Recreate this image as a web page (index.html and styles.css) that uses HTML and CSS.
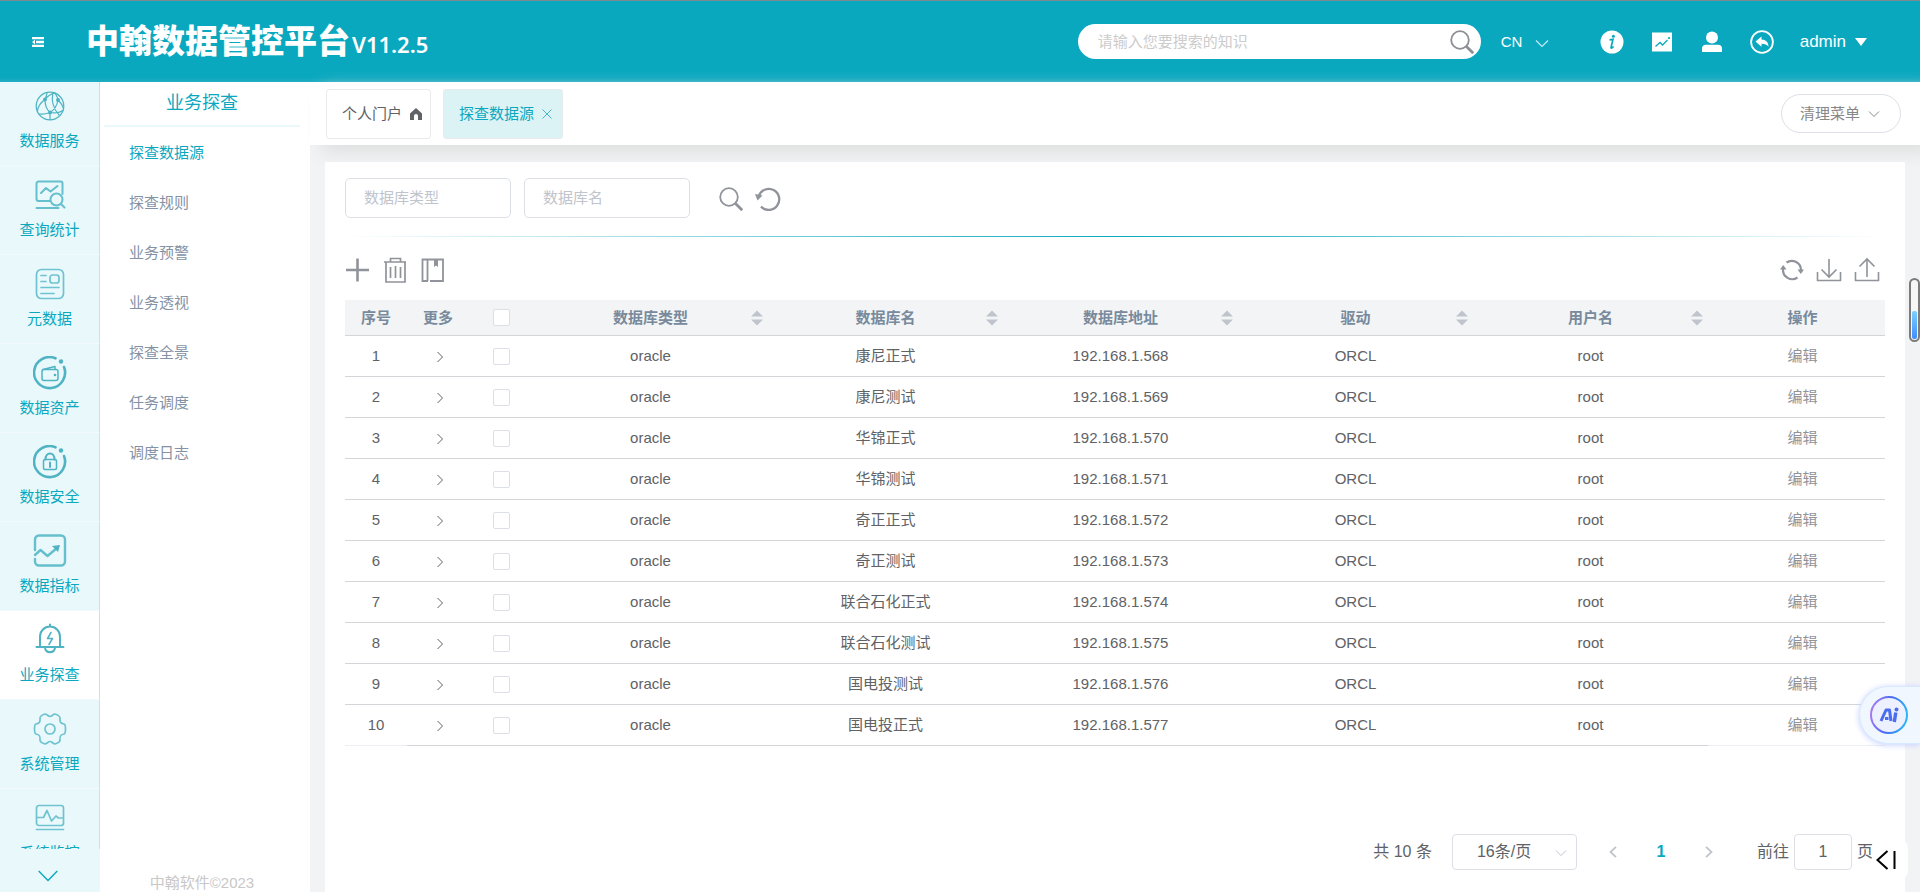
FILE: index.html
```html
<!DOCTYPE html>
<html lang="zh-CN">
<head>
<meta charset="utf-8">
<title>中翰数据管控平台</title>
<link rel="stylesheet" href="styles.css">
</head>
<body>
<svg class="defs" aria-hidden="true">
  <symbol id="chev-down" viewBox="0 0 12 8"><path d="M1 1.500l5 5 5-5" fill="none" stroke="currentColor"/></symbol>
  <symbol id="chev-right" viewBox="0 0 8 12"><path d="M1.500 1l5 5-5 5" fill="none" stroke="currentColor"/></symbol>
  <symbol id="sort" viewBox="0 0 12 16"><path d="M0 6.500L6 .5l6 6zM0 9.500h12l-6 6z" fill="currentColor"/></symbol>
  <symbol id="search" viewBox="0 0 24 24"><g fill="none" stroke="currentColor"><circle cx="10" cy="10" r="8.800" stroke-width="1.800"/><path d="M16.200 16.200l7 7" stroke-width="2.800"/></g></symbol>
</svg>
<div class="app">
  <header class="topbar">
    <button class="menu-btn" aria-label="收起菜单"><svg width="12" height="10" viewBox="0 0 12 10"><path d="M0 0h12v2.300H0zM4 3.800h8v2.400H4zM0 7.700h12V10H0zM3 2.500v5L0 5z" fill="#fff"/></svg></button>
    <h1 class="brand">中翰数据管控平台<span class="version">V11.2.5</span></h1>
    <form class="search">
      <input type="text" aria-label="搜索知识" placeholder="请输入您要搜索的知识">
      <button type="button" aria-label="搜索"><svg width="24" height="24"><use href="#search"/></svg></button>
    </form>
    <div class="lang">
      <select aria-label="语言"><option>CN</option></select>
      <svg class="select-arrow" width="14" height="9" viewBox="0 0 14 9"><path d="M1 1.500l6 6 6-6" fill="none" stroke="currentColor" stroke-width="1.200"/></svg>
    </div>
    <nav class="tools">
      <button aria-label="信息"><svg width="24" height="24" viewBox="0 0 24 24"><circle cx="12" cy="12" r="11.500" fill="#fff"/><circle cx="13.400" cy="6.200" r="1.500" fill="#0aa8bf"/><path d="M9.500 9.800l3.500-.5-2 8.200c0 1.200 1.300.5 2.600-1" fill="none" stroke="#0aa8bf" stroke-width="1.700"/></svg></button>
      <button aria-label="图表"><svg width="24" height="24" viewBox="0 0 24 24"><path d="M2 2.500h20v19H2z" fill="#fff"/><path d="M5.500 16.500l4.500-4 2.500 2.500 5-5" fill="none" stroke="#0aa8bf" stroke-width="1.300"/><circle cx="19" cy="8" r="1.100" fill="#0aa8bf"/></svg></button>
      <button aria-label="用户"><svg width="24" height="24" viewBox="0 0 24 24"><circle cx="12" cy="7.500" r="6" fill="#fff"/><path d="M2 22v-3.500c0-2.500 1.500-3.800 4-3.800h12c2.500 0 4 1.300 4 3.800V22z" fill="#fff"/></svg></button>
      <button aria-label="返回"><svg width="24" height="24" viewBox="0 0 24 24"><circle cx="12" cy="12" r="10.900" fill="none" stroke="#fff" stroke-width="1.800"/><path d="M5.500 11.500l6-5v3c4.500.2 7 2.800 7 7.300-1.700-2.300-3.700-3-7-3v3z" fill="#fff"/></svg></button>
    </nav>
    <button class="account">admin <svg width="12" height="8" viewBox="0 0 12 8"><path d="M0 0h12L6 8z" fill="#fff"/></svg></button>
  </header>

  <div class="body">
    <aside class="rail">
      <nav class="rail-list">
        <a href="#" class="rail-item"><svg viewBox="0 0 34 34" class="soft dark thin"><circle cx="17" cy="17" r="13.800"/><path d="M12 10.500C7 14 5 17 4.500 22M12 10.500c0 6 1.500 10 5 13M12 10.500C13 8 14 5 14 3.500M22 4.200C18 5 14 8 12 10.500M22 4.200c1.500 2 2.500 4 3 6.800M25 11c-1 6-4 10-8 12.500M25 11c3 3 5 6 5.500 9M17 23.500c-4 1.500-7 2-10.500 1.500M17 23.500c5 1 9 .5 13-2M17 23.500V30.500M20 4c-2 8 0 15 6 22"/><circle cx="12" cy="10.500" r="2" class="fill"/><circle cx="25" cy="11" r="2" class="fill"/><circle cx="17" cy="23.500" r="2" class="fill"/></svg>数据服务</a>
        <a href="#" class="rail-item"><svg viewBox="0 0 34 34" class="soft mid"><path d="M17 23H5.500a2 2 0 0 1-2-2V5.500a2 2 0 0 1 2-2h22a2 2 0 0 1 2 2V16M3.500 30h22M8 15l5-5 4.500 3.500L24.500 8"/><circle cx="23.500" cy="21.500" r="6"/><path d="M28 26l3.500 3.500"/></svg>查询统计</a>
        <a href="#" class="rail-item"><svg viewBox="0 0 34 34" class="soft"><rect x="3.500" y="2.500" width="27" height="29" rx="5"/><rect x="17" y="8" width="9" height="8" rx="2.500"/><path d="M8 8.500h5M8 14.500h5M8 20.500h18M8 26.500h13"/></svg>元数据</a>
        <a href="#" class="rail-item"><svg viewBox="0 0 34 34" class="soft dark"><path d="M22.500 2.300A15.500 15.500 0 1 0 31 11" stroke-width="2.600"/><circle cx="28" cy="5.500" r="2.200" class="fill"/><rect x="9" y="13.500" width="16" height="11" rx="2"/><path d="M10 13.500l12-3v3"/><circle cx="22" cy="19" r=".6"/></svg>数据资产</a>
        <a href="#" class="rail-item"><svg viewBox="0 0 34 34" class="soft dark"><path d="M22.500 2.300A15.500 15.500 0 1 0 31 11" stroke-width="2.600"/><circle cx="28" cy="5.500" r="2.200" class="fill"/><rect x="10.500" y="14.500" width="13" height="10" rx="1.500"/><path d="M12.500 14.500c0-8 9-8 9 0M17 17.500v4.500" stroke-width="2"/></svg>数据安全</a>
        <a href="#" class="rail-item"><svg viewBox="0 0 34 34" class="soft mid"><path d="M2 16V5.500a4 4 0 0 1 4-4h22a4 4 0 0 1 4 4v22a4 4 0 0 1-4 4H6a4 4 0 0 1-4-4V25M2 21l5.500-5 7 6L24 14" stroke-width="2.400"/><path d="M19 12l8-1-2 7z" class="fill"/></svg>数据指标</a>
        <a href="#" class="rail-item active"><svg viewBox="0 0 34 34" class="soft dark"><path d="M3.500 24h27M7 24V13.500a10 10 0 0 1 20 0V24M17 1.500v2M12 25c1 5.500 9 5.500 10 0" stroke-width="2"/><path d="M18 9.500l-3.500 6h5l-3.500 6"/></svg>业务探查</a>
        <a href="#" class="rail-item"><svg viewBox="0 0 34 34" class="soft"><path d="M12 2c2 0 3 2.500 5 2.500S20 2 22 2c3 1 5 2 5 4-.5 4 .5 5.500 4 6 1.500.5 1.500 2 1.500 5s0 4.500-1.500 5c-3.500.5-4.500 2-4 6 0 2-2 3-5 4-2 0-3-2.500-5-2.500S14 32 12 32c-3-1-5-2-5-4 .5-4-.5-5.500-4-6-1.500-.5-1.500-2-1.500-5s0-4.500 1.500-5c3.500-.5 4.500-2 4-6 0-2 2-3 5-4z"/><circle cx="17" cy="17" r="5"/></svg>系统管理</a>
        <a href="#" class="rail-item"><svg viewBox="0 0 34 34" class="soft"><rect x="3.500" y="4.500" width="27" height="20" rx="2.500"/><path d="M3.500 28.500h27M4 16.500h6.500l3.500-7 4.500 10.500 4.500-5 2.500 2H30"/></svg>系统监控</a>
      </nav>
      <button class="rail-more" aria-label="更多菜单"><svg width="20" height="12" viewBox="0 0 20 12"><path d="M.7 1L10 10.500 19.300 1" fill="none" stroke="#0aa8bf" stroke-width="1.400"/></svg></button>
    </aside>

    <aside class="submenu">
      <h2>业务探查</h2>
      <nav>
        <a href="#" class="current">探查数据源</a>
        <a href="#">探查规则</a>
        <a href="#">业务预警</a>
        <a href="#">业务透视</a>
        <a href="#">探查全景</a>
        <a href="#">任务调度</a>
        <a href="#">调度日志</a>
      </nav>
      <p class="copyright">中翰软件©2023</p>
    </aside>

    <main class="main">
      <div class="tabs">
        <button class="tab">个人门户 <svg width="12" height="12" viewBox="0 0 12 12"><path d="M6 0l6 5.500V12H8V8a2 2 0 0 0-4 0v4H0V5.500z" fill="#606266"/></svg></button>
        <button class="tab active">探查数据源 <svg width="10" height="10" viewBox="0 0 10 10"><path d="M.5.5l9 9M9.500.5l-9 9" stroke="#4bb5c8"/></svg></button>
        <button class="clear">清理菜单 <svg width="12" height="8"><use href="#chev-down"/></svg></button>
      </div>

      <section class="card">
        <form class="filters">
          <input type="text" aria-label="数据库类型" placeholder="数据库类型">
          <input type="text" aria-label="数据库名" placeholder="数据库名">
          <div class="filter-actions">
            <button type="button" aria-label="查询"><svg width="24" height="24"><use href="#search"/></svg></button>
            <button type="button" aria-label="重置"><svg width="26" height="24" viewBox="0 0 26 24"><path d="M4 8.500A10.500 10.500 0 1 1 6 19.500" fill="none" stroke="currentColor" stroke-width="2.300"/><path d="M0 7l7.500 1.500-5 5z" fill="currentColor"/></svg></button>
          </div>
        </form>
        <hr class="divider">
        <div class="toolbar">
          <button aria-label="新增"><svg width="24" height="26" viewBox="0 0 24 26"><path d="M1 13h23M12.500 1.500v23" stroke="currentColor" stroke-width="2.600"/></svg></button>
          <button aria-label="删除"><svg width="24" height="26" viewBox="0 0 24 26"><path d="M1 5h22M7.500 5V1.500h10V5M3 5v20h19V5M7.500 10v11M12.500 9v12M17.500 10v11" fill="none" stroke="currentColor" stroke-width="1.700"/></svg></button>
          <button aria-label="字典"><svg width="24" height="26" viewBox="0 0 24 26"><path d="M7 24H1.500V2.500H22V24H9M6.500 2.500V24" fill="none" stroke="currentColor" stroke-width="1.800"/><path d="M13 2.500h4V10l-2-1.500L13 10z" fill="currentColor"/></svg></button>
          <button class="push" aria-label="刷新"><svg width="24" height="26" viewBox="0 0 24 26"><path d="M6.500 5.500A9.300 9.300 0 0 1 21 13.500M3 12A9.300 9.300 0 0 0 17.500 20.500" fill="none" stroke="currentColor" stroke-width="2.200"/><path d="M0 12.500L3.200 8l3.300 4.500zM17.500 12.500H24L20.800 17z" fill="currentColor"/></svg></button>
          <button aria-label="下载"><svg width="26" height="26" viewBox="0 0 26 26"><path d="M1.500 15v8.500h23V15M13 2v18M5.500 12.500L13 20l7.500-7.500" fill="none" stroke="currentColor" stroke-width="1.600"/></svg></button>
          <button aria-label="上传"><svg width="26" height="26" viewBox="0 0 26 26"><path d="M1.500 15v8.500h23V15M13 20V2M5.500 9.500L13 2l7.500 7.500" fill="none" stroke="currentColor" stroke-width="1.600"/></svg></button>
        </div>

        <table class="grid">
          <colgroup><col class="c-index"><col class="c-more"><col class="c-check"><col><col><col><col><col><col class="c-op"></colgroup>
          <thead>
            <tr>
              <th>序号</th><th>更多</th><th><input type="checkbox" aria-label="全选"></th>
              <th><div class="sortable">数据库类型<svg width="12" height="16"><use href="#sort"/></svg></div></th>
              <th><div class="sortable">数据库名<svg width="12" height="16"><use href="#sort"/></svg></div></th>
              <th><div class="sortable">数据库地址<svg width="12" height="16"><use href="#sort"/></svg></div></th>
              <th><div class="sortable">驱动<svg width="12" height="16"><use href="#sort"/></svg></div></th>
              <th><div class="sortable">用户名<svg width="12" height="16"><use href="#sort"/></svg></div></th>
              <th>操作</th>
            </tr>
          </thead>
          <tbody>
            <tr><td>1</td><td><button class="expand" aria-label="展开"><svg width="8" height="12"><use href="#chev-right"/></svg></button></td><td><input type="checkbox" aria-label="选择 1"></td><td>oracle</td><td>康尼正式</td><td>192.168.1.568</td><td>ORCL</td><td>root</td><td><a href="#">编辑</a></td></tr>
            <tr><td>2</td><td><button class="expand" aria-label="展开"><svg width="8" height="12"><use href="#chev-right"/></svg></button></td><td><input type="checkbox" aria-label="选择 2"></td><td>oracle</td><td>康尼测试</td><td>192.168.1.569</td><td>ORCL</td><td>root</td><td><a href="#">编辑</a></td></tr>
            <tr><td>3</td><td><button class="expand" aria-label="展开"><svg width="8" height="12"><use href="#chev-right"/></svg></button></td><td><input type="checkbox" aria-label="选择 3"></td><td>oracle</td><td>华锦正式</td><td>192.168.1.570</td><td>ORCL</td><td>root</td><td><a href="#">编辑</a></td></tr>
            <tr><td>4</td><td><button class="expand" aria-label="展开"><svg width="8" height="12"><use href="#chev-right"/></svg></button></td><td><input type="checkbox" aria-label="选择 4"></td><td>oracle</td><td>华锦测试</td><td>192.168.1.571</td><td>ORCL</td><td>root</td><td><a href="#">编辑</a></td></tr>
            <tr><td>5</td><td><button class="expand" aria-label="展开"><svg width="8" height="12"><use href="#chev-right"/></svg></button></td><td><input type="checkbox" aria-label="选择 5"></td><td>oracle</td><td>奇正正式</td><td>192.168.1.572</td><td>ORCL</td><td>root</td><td><a href="#">编辑</a></td></tr>
            <tr><td>6</td><td><button class="expand" aria-label="展开"><svg width="8" height="12"><use href="#chev-right"/></svg></button></td><td><input type="checkbox" aria-label="选择 6"></td><td>oracle</td><td>奇正测试</td><td>192.168.1.573</td><td>ORCL</td><td>root</td><td><a href="#">编辑</a></td></tr>
            <tr><td>7</td><td><button class="expand" aria-label="展开"><svg width="8" height="12"><use href="#chev-right"/></svg></button></td><td><input type="checkbox" aria-label="选择 7"></td><td>oracle</td><td>联合石化正式</td><td>192.168.1.574</td><td>ORCL</td><td>root</td><td><a href="#">编辑</a></td></tr>
            <tr><td>8</td><td><button class="expand" aria-label="展开"><svg width="8" height="12"><use href="#chev-right"/></svg></button></td><td><input type="checkbox" aria-label="选择 8"></td><td>oracle</td><td>联合石化测试</td><td>192.168.1.575</td><td>ORCL</td><td>root</td><td><a href="#">编辑</a></td></tr>
            <tr><td>9</td><td><button class="expand" aria-label="展开"><svg width="8" height="12"><use href="#chev-right"/></svg></button></td><td><input type="checkbox" aria-label="选择 9"></td><td>oracle</td><td>国电投测试</td><td>192.168.1.576</td><td>ORCL</td><td>root</td><td><a href="#">编辑</a></td></tr>
            <tr><td>10</td><td><button class="expand" aria-label="展开"><svg width="8" height="12"><use href="#chev-right"/></svg></button></td><td><input type="checkbox" aria-label="选择 10"></td><td>oracle</td><td>国电投正式</td><td>192.168.1.577</td><td>ORCL</td><td>root</td><td><a href="#">编辑</a></td></tr>
          </tbody>
        </table>

        <div class="pager">
          <span>共 10 条</span>
          <div class="page-size">
            <select aria-label="每页条数"><option>16条/页</option></select>
            <svg class="select-arrow" width="12" height="8"><use href="#chev-down"/></svg>
          </div>
          <div class="pages">
            <button aria-label="上一页"><svg width="8" height="12" viewBox="0 0 8 12"><path d="M7 .8L1.500 6 7 11.200" fill="none" stroke="#c0c4cc" stroke-width="1.800"/></svg></button>
            <button class="on">1</button>
            <button aria-label="下一页"><svg width="8" height="12" viewBox="0 0 8 12"><path d="M1 .8L6.500 6 1 11.200" fill="none" stroke="#c0c4cc" stroke-width="1.800"/></svg></button>
          </div>
          <label class="jump">前往<input type="text" value="1">页</label>
        </div>
      </section>
    </main>
  </div>

  <div class="scroll-badge" aria-hidden="true"><span></span></div>
  <button class="assistant" aria-label="Ai"><svg width="40" height="40" viewBox="0 0 40 40"><defs><linearGradient id="ring" x1="0" y1=".3" x2="1" y2=".5"><stop offset="0" stop-color="#a77bf3"/><stop offset=".5" stop-color="#4b6df0"/><stop offset="1" stop-color="#2bb4f5"/></linearGradient></defs><circle cx="20" cy="20" r="18" fill="#edf0fe" stroke="url(#ring)" stroke-width="2"/><path d="M12 26l5-11h3.500l1.500 11M16 23.500h3.500" fill="none" stroke="#4a6cf0" stroke-width="3" stroke-linejoin="round"/><path d="M26.800 17.500l-1.500 9.500" stroke="#4a6cf0" stroke-width="3.400"/><circle cx="27.500" cy="14.500" r="2" fill="#4a6cf0"/></svg></button>
  <button class="collapse" aria-label="收起"><svg width="20" height="20" viewBox="0 0 20 20"><path d="M11.500 1L1.500 10l10 9M18.500 1v18" fill="none" stroke="#000" stroke-width="2"/></svg></button>
</div>
</body>
</html>
```

FILE: styles.css
```css
:root {
  --teal: #0aa8bf;
  --line: #dcdfe6;
  --text: #606266;
  --muted: #909399;
}
* { box-sizing: border-box; }
body {
  margin: 0;
  font: 15px/24px "Liberation Sans", "Noto Sans CJK SC", sans-serif;
  color: var(--text);
  background: #f2f3f5;
}
button, input, select { font: inherit; color: inherit; }
button { padding: 0; border: 0; background: none; cursor: pointer; }
a { color: inherit; text-decoration: none; }
h1, h2, p { margin: 0; }
svg { display: block; }
.defs { position: absolute; width: 0; height: 0; }

.app { height: 100vh; display: flex; flex-direction: column; overflow: hidden; position: relative; }

.topbar {
  flex: none;
  height: 82px;
  padding: 0 53px 0 32px;
  display: flex;
  align-items: center;
  color: #fff;
  background: linear-gradient(#0aa8bf 95%, #23adc2);
  border-top: 1px solid #7e8a90;
}
.brand {
  margin: 0 auto 0 42px;
  font: 900 33px/40px "Noto Sans CJK SC", sans-serif;
  white-space: nowrap;
}
.version { font: 600 22px/40px "Noto Sans", sans-serif; margin-left: 2px; }
.search {
  width: 403px;
  height: 35px;
  padding: 0 7px 0 20px;
  display: flex;
  align-items: center;
  background: #fff;
  border-radius: 18px;
  color: #8c8f94;
}
.search input { flex: 1; min-width: 0; padding: 0; border: 0; outline: 0; background: none; }
.search input::placeholder { color: #ccc; }
.lang { position: relative; width: 68px; margin-left: 20px; }
.lang select { width: 100%; padding: 0; border: 0; appearance: none; background: none; color: #fff; }
.select-arrow { position: absolute; right: 20px; top: 50%; margin-top: -3px; pointer-events: none; }
.lang .select-arrow { color: #c3ebf1; }
.tools { display: flex; gap: 26px; margin-left: 31px; }
.account { display: flex; align-items: center; gap: 9px; margin-left: 26px; font-size: 17px; color: #fff; }

.body { flex: 1; min-height: 0; display: flex; }

.rail { flex: none; width: 100px; display: flex; flex-direction: column; background: #e8f8fb; color: var(--teal); }
.rail-list { flex: 1; min-height: 0; overflow: hidden; }
.rail-item {
  height: 89px;
  padding: 12px 0 0;
  display: flex;
  flex-direction: column;
  align-items: center;
  gap: 6px;
  border-right: 1px solid #bfe6ee;
  border-bottom: 1px solid #f0fafc;
}
.rail-item:first-child { margin-top: -5px; }
.rail-item.active { background: #fff; }
.rail-item svg { width: 34px; height: 34px; flex: none; }
.soft { fill: none; stroke: #6fc3d0; stroke-width: 1.7; stroke-linecap: round; stroke-linejoin: round; }
.soft.mid { stroke: #66bfcd; stroke-width: 2; }
.soft.dark { stroke: #4fb3c3; stroke-width: 1.5; }
.soft.thin { stroke-width: 1.2; }
.fill { fill: #4fb3c3; stroke: none; }
.rail-more { height: 43px; display: grid; place-items: center; padding: 10px 4px 0 0; }

.submenu { flex: none; width: 210px; display: flex; flex-direction: column; background: #fff; color: #8492a6; }
.submenu h2 {
  margin: 0 10px 0 4px;
  padding: 7px 0 8px;
  font-size: 18px;
  line-height: 28px;
  font-weight: 400;
  text-align: center;
  color: var(--teal);
  border-bottom: 2px solid #e8f8fb;
}
.submenu nav { flex: 1; padding-top: 1px; }
.submenu a { display: block; padding-left: 29px; line-height: 50px; }
.submenu a.current { color: var(--teal); }
.copyright { margin: 0 10px 0 4px; line-height: 18px; text-align: center; color: #c8c8c8; }

.main { flex: 1; min-width: 0; display: flex; flex-direction: column; }
.tabs {
  flex: none;
  height: 63px;
  padding: 0 19px 0 16px;
  display: flex;
  align-items: center;
  gap: 12px;
  background: #fff;
  box-shadow: 12px 8px 16px #dfe0e0;
}
.tab {
  height: 50px;
  padding: 0 8px 0 15px;
  display: flex;
  align-items: center;
  gap: 8px;
  border: 1px solid #e8eaec;
  border-radius: 3px;
}
.tab.active { padding-right: 10px; color: var(--teal); background: #dcf3f6; }
.clear {
  height: 39px;
  margin-left: auto;
  padding: 0 20px 0 18px;
  display: flex;
  align-items: center;
  gap: 8px;
  border: 1px solid var(--line);
  border-radius: 20px;
  color: #888;
}
.card {
  flex: 1;
  min-height: 0;
  margin: 17px 15px 0;
  padding: 16px 20px 22px;
  display: flex;
  flex-direction: column;
  background: #fff;
  position: relative;
}
.filters { display: flex; align-items: center; gap: 13px; }
.filters input {
  width: 166px;
  height: 40px;
  padding: 0 18px 2px;
  border: 1px solid var(--line);
  border-radius: 5px;
  outline: 0;
}
.filters input::placeholder { color: #c0c4cc; }
.filter-actions { display: flex; gap: 12px; margin-left: 16px; padding-top: 2px; color: var(--muted); }
.divider {
  width: 100%;
  height: 1px;
  margin: 18px 0 0;
  border: 0;
  background: linear-gradient(90deg, transparent, #0aa8bf 50%, transparent);
}
.toolbar { display: flex; gap: 14px; padding: 20px 5px 17px 0; color: var(--muted); }
.toolbar .push { margin-left: auto; }
.toolbar .push, .toolbar .push + button { margin-right: -2px; }

.grid { width: 100%; table-layout: fixed; border-collapse: separate; border-spacing: 0; text-align: center; }
.c-index, .c-more { width: 62px; }
.c-check { width: 64px; }
.c-op { width: 177px; }
.grid th, .grid td { height: 41px; padding: 0; border-bottom: 1px solid #d3d5d8; line-height: 24px; }
.grid th { height: 36px; background: #f2f4f6; color: #788a9c; }
.grid th:last-child, .grid td:last-child { padding-left: 12px; color: var(--muted); }
.grid th:last-child { color: #788a9c; }
.grid tbody tr:last-child td:first-child, .grid tbody tr:last-child td:last-child { border-bottom-color: #ebeef5; }
.sortable { display: grid; grid-template-columns: 1fr 22px; align-items: center; padding-left: 22px; }
.sortable svg { color: #c0c4cc; margin: 0 auto; }
.expand { display: block; margin: 0 auto; padding: 2px 0 0 4px; }
.grid input {
  display: block;
  width: 17px;
  height: 17px;
  margin: 0 auto;
  appearance: none;
  background: #fff;
  border: 1px solid var(--line);
  border-radius: 2px;
}

.pager { display: flex; align-items: center; justify-content: flex-end; margin-top: auto; padding-right: 12px; font-size: 16px; }
.page-size { position: relative; width: 125px; margin-left: 20px; }
.page-size select {
  width: 100%;
  height: 36px;
  padding: 0 24px;
  appearance: none;
  background: #fff;
  border: 1px solid var(--line);
  border-radius: 4px;
}
.page-size .select-arrow { right: 10px; color: #c0c4cc; }
.pages { display: flex; margin: 0 24px 0 12px; }
.pages button { width: 48px; height: 24px; display: grid; place-items: center; }
.pages .on { color: var(--teal); font-weight: 700; }
.jump { display: flex; align-items: center; gap: 5px; }
.jump input { width: 58px; height: 36px; border: 1px solid var(--line); border-radius: 4px; text-align: center; }

.scroll-badge {
  position: absolute;
  right: 0;
  top: 278px;
  width: 11px;
  height: 64px;
  padding: 0 1px 1px;
  display: flex;
  align-items: flex-end;
  border: 2px solid #7b7b7b;
  border-radius: 6px;
  background: #f6f6f6;
}
.scroll-badge span { width: 100%; height: 28px; border-radius: 2px; background: linear-gradient(#7cd0ff, #3f8cff); }
.assistant {
  position: absolute;
  right: 0;
  top: 686px;
  width: 61px;
  height: 58px;
  padding-left: 9px;
  border: 1px solid #d8e9ff;
  border-right: 0;
  border-radius: 29px 0 0 29px;
  background: #f0f7ff;
  box-shadow: 0 1px 6px #c5d0ff;
}
.collapse {
  position: absolute;
  right: 12px;
  bottom: 14px;
  width: 36px;
  height: 37px;
  padding: 0 0 0 4px;
  border-radius: 6px;
  background: rgba(255, 255, 255, 0.85);
}
```
